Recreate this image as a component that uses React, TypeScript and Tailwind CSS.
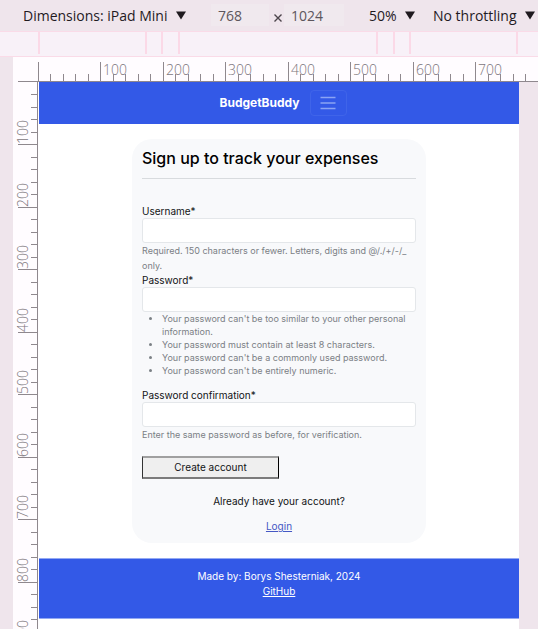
import React from "react";

function ticks(count: number) {
  return Array.from({ length: count }, (_, i) => ({
    at: Math.floor(i * 12.5),
    major: i % 5 === 0,
    label: i > 0 && i % 5 === 0 ? String(i * 20) : "",
  }));
}

const TOP_TICKS = ticks(40);
const SIDE_TICKS = ticks(46).slice(1);

function Arrow() {
  return (
    <svg width="10" height="9" viewBox="0 0 10 9" className="pointer-events-none shrink-0" aria-hidden="true">
      <path d="M0 0.5H10L5 8.5Z" fill="#1f1a1f" />
    </svg>
  );
}

function Picker({ label, value }: { label: string; value: string }) {
  return (
    <label className="flex shrink-0 items-center gap-2">
      <select aria-label={label} className="appearance-none bg-transparent text-[#1f1a1f] outline-none">
        <option>{value}</option>
      </select>
      <Arrow />
    </label>
  );
}

function Toolbar() {
  return (
    <div className="flex h-[31px] items-center overflow-hidden bg-[#efe5ec] pb-px pl-[23px] font-['Open_Sans',sans-serif] text-[14px]">
      <Picker label="Device" value="Dimensions: iPad Mini" />
      <input
        aria-label="Width"
        defaultValue="768"
        className="ml-[25px] h-[22px] w-[58px] shrink-0 bg-[#f0e9ee] pl-[7px] text-[#5d565c] outline-none"
      />
      <svg width="8" height="8" viewBox="0 0 8 8" className="mt-1.5 ml-[5px] shrink-0" aria-hidden="true">
        <path d="M0.5 0.5L7.5 7.5M7.5 0.5L0.5 7.5" stroke="#4c454b" strokeWidth="1.4" />
      </svg>
      <input
        aria-label="Height"
        defaultValue="1024"
        className="ml-[2px] h-[22px] w-[60px] shrink-0 bg-[#f0e9ee] pl-[7px] text-[#5d565c] outline-none"
      />
      <div className="ml-[25px] flex gap-[18px]">
        <Picker label="Zoom" value="50%" />
        <Picker label="Throttling" value="No throttling" />
      </div>
    </div>
  );
}

function MediaBar() {
  return (
    <svg className="block h-[26px] w-full bg-[#f8f1f8]" aria-hidden="true">
      <path d="M0 0.5H2000M0 25.5H2000" stroke="#fadbe8" />
      <path
        d="M39 1V23M146 1V23M162 1V23M179 1V23M377 1V23M394 1V23M410 1V23M517 1V23"
        stroke="#fbd9e7"
        strokeWidth="2"
      />
    </svg>
  );
}

function TopRuler() {
  return (
    <svg className="block h-[25px] w-full bg-[#fffcff]" aria-hidden="true">
      <rect x="5" y="24" width="2000" height="1" fill="#8f888e" />
      {TOP_TICKS.map((t) => (
        <g key={t.at}>
          <rect x={25 + t.at} y={t.major ? 5 : 17} width="1" height={t.major ? 20 : 8} fill="#8f888e" />
          {t.label && (
            <text x={28 + t.at} y="18" fill="#7d767c" className="font-['Open_Sans',sans-serif] text-[14px] font-light">
              {t.label}
            </text>
          )}
        </g>
      ))}
    </svg>
  );
}

function SideRuler() {
  return (
    <svg className="block w-[26px] shrink-0 self-stretch bg-[#fffcff]" aria-hidden="true">
      <rect x="24" y="0" width="1" height="2000" fill="#8f888e" />
      {SIDE_TICKS.map((t) => (
        <g key={t.at}>
          <rect x={t.major ? 5 : 18} y={t.at} width={t.major ? 20 : 7} height="1" fill="#8f888e" />
          {t.label && (
            <text
              transform={`translate(15 ${t.at}) rotate(-90)`}
              fill="#7d767c"
              className="font-['Open_Sans',sans-serif] text-[14px] font-light"
            >
              {t.label}
            </text>
          )}
        </g>
      ))}
    </svg>
  );
}

function Field({ id, label, type, children }: { id: string; label: string; type: string; children: React.ReactNode }) {
  return (
    <div>
      <label htmlFor={id} className="block text-[10px] leading-[13px]">
        {label}*
      </label>
      <input
        id={id}
        type={type}
        className="block h-[25px] w-full rounded-[3px] border border-[#e4e7ea] bg-white px-2 text-[10px] outline-none"
      />
      <div className="text-[9px] text-[#7b8085]">{children}</div>
    </div>
  );
}

function SignUp() {
  return (
    <form
      className="mx-auto mt-[15px] w-[294px] max-w-full rounded-[20px] bg-[#f8f9fb] px-[10px] pb-[9px] text-[#111315]"
      onSubmit={(e) => e.preventDefault()}
    >
      <h1 className="border-b border-[#d8dbde] pt-[7px] pb-2 text-[16px] leading-6 font-medium text-black">
        Sign up to track your expenses
      </h1>
      <div className="pt-[26px]">
        <Field id="username" label="Username" type="text">
          <p className="pb-px leading-[15px]">Required. 150 characters or fewer. Letters, digits and @/./+/-/_ only.</p>
        </Field>
        <Field id="password" label="Password" type="password">
          <ul className="mb-[12px] list-disc pl-5 leading-[13px]">
            <li>Your password can't be too similar to your other personal information.</li>
            <li>Your password must contain at least 8 characters.</li>
            <li>Your password can't be a commonly used password.</li>
            <li>Your password can't be entirely numeric.</li>
          </ul>
        </Field>
        <Field id="confirmation" label="Password confirmation" type="password">
          <p className="leading-[15px]">Enter the same password as before, for verification.</p>
        </Field>
      </div>
      <button
        type="submit"
        className="mt-[14px] block h-[23px] w-1/2 border-x border-y-2 border-t-[#a0a0a0] border-r-black border-b-[#7b7b7b] border-l-[#333333] bg-[#efefef] text-[10px] leading-[15px]"
      >
        Create account
      </button>
      <p className="mt-[15px] text-center text-[10px] leading-[15px]">Already have your account?</p>
      <p className="mt-[10px] text-center text-[10px] leading-[15px]">
        <a href="#login" className="text-[#4558c4] underline">
          Login
        </a>
      </p>
    </form>
  );
}

export default function App() {
  return (
    <div className="flex min-h-screen flex-col overflow-hidden bg-[#efe5ec]">
      <Toolbar />
      <MediaBar />
      <div className="flex flex-1 flex-col pl-[13px]">
        <TopRuler />
        <div className="flex flex-1 pr-[19px]">
          <SideRuler />
          <main className="flex-1 bg-white pb-[11px] font-[Inter,sans-serif]">
            <nav className="flex h-[42px] items-center justify-center gap-[10px] bg-[#3359e7] pl-2">
              <a href="#home" className="text-[12px] font-bold text-white">
                BudgetBuddy
              </a>
              <button
                type="button"
                aria-label="Menu"
                className="flex h-[26px] w-[37px] items-center justify-center rounded-[4px] border border-[#3f64e9]"
              >
                <svg width="16" height="14" viewBox="0 0 16 14" aria-hidden="true">
                  <path d="M0.5 1.5H15.5M0.5 7H15.5M0.5 12.5H15.5" stroke="#8ba4f4" strokeWidth="1.5" />
                </svg>
              </button>
            </nav>
            <SignUp />
            <footer className="mt-[15px] h-[61px] border-y border-[#93a9f3] bg-[#3359e7] pt-[10px] text-center text-[10px] leading-[15px] text-white">
              <p>Made by: Borys Shesterniak, 2024</p>
              <a href="#github" className="underline">
                GitHub
              </a>
            </footer>
          </main>
        </div>
      </div>
    </div>
  );
}
